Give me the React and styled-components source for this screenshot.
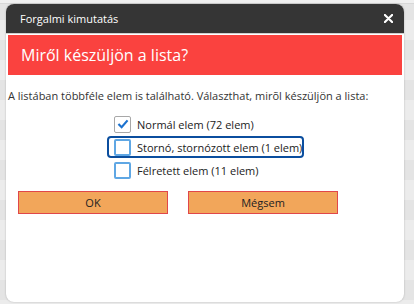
import React, { useState } from 'react'
import styled, { createGlobalStyle } from 'styled-components'

const GlobalStyle = createGlobalStyle`
  html, body {
    margin: 0;
    padding: 0;
    background: #e7e7e7;
    font-family: "Open Sans", "Noto Sans", sans-serif;
  }
  * { box-sizing: border-box; }
`

const Backdrop = styled.div`
  width: 414px;
  height: 304px;
  padding: 4px 0 0 6px;
  background:
    linear-gradient(#f0f0f0 0, #f0f0f0 3px, #d8d8d8 3px, #d8d8d8 4px, transparent 4px),
    repeating-linear-gradient(#e4e4e4 0, #e4e4e4 20px, #ececec 20px, #ececec 40px);
  overflow: hidden;
`

const Dialog = styled.div`
  width: 398px;
  height: 298px;
  background: #fff;
  border-radius: 8px;
  box-shadow: 0 0 2px rgba(0, 0, 0, 0.25);
  overflow: hidden;
  display: flex;
  flex-direction: column;
`

const TitleBar = styled.div`
  height: 30px;
  background: #353535;
  color: #fff;
  display: flex;
  align-items: center;
  justify-content: space-between;
  padding: 0 11px 0 14px;
  font-size: 11px;
  border-bottom: 1px solid #cfcfcf;
`

const CloseButton = styled.button`
  border: 0;
  background: none;
  padding: 0;
  display: flex;
  cursor: pointer;
`

const Content = styled.div`
  padding: 0 2px;
  display: flex;
  flex-direction: column;
`

const Banner = styled.h2`
  margin: 1px 0 0;
  height: 40px;
  background: #fa423f;
  color: #fff;
  font-size: 16px;
  font-weight: 400;
  display: flex;
  align-items: center;
  padding-left: 13px;
`

const Intro = styled.p`
  margin: 12px 0 0;
  font-size: 11px;
  line-height: 18px;
  color: #333;
`

const OptionList = styled.div`
  margin: 8px 0 0 99px;
  display: flex;
  flex-direction: column;
  align-items: flex-start;
  gap: 1px;
`

const Option = styled.label`
  height: 22px;
  display: flex;
  align-items: center;
  gap: 6px;
  padding: 0 0 0 5px;
  border: 2px solid ${p => (p.$focused ? '#0b4e9e' : 'transparent')};
  border-radius: 4px;
  font-size: 11px;
  color: #222;
  white-space: nowrap;
  cursor: pointer;
`

const Box = styled.span`
  width: 17px;
  height: 17px;
  flex: none;
  border: ${p => (p.$checked ? '1px solid #a8a8a8' : '2px solid #5fa7e4')};
  border-radius: 2px;
  background: #fff;
  display: flex;
  align-items: center;
  justify-content: center;
`

const Buttons = styled.div`
  margin: 10px 0 0 10px;
  display: flex;
  gap: 20px;
`

const ActionButton = styled.button`
  width: 150px;
  height: 23px;
  background: #f2a65a;
  border: 1px solid #e0474a;
  font-family: "Open Sans", "Noto Sans", sans-serif;
  font-size: 11px;
  color: #222;
  padding: 0;
  cursor: pointer;
`

const options = [
  { label: 'Normál elem (72 elem)', checked: true },
  { label: 'Stornó, stornózott elem (1 elem)', checked: false, focused: true },
  { label: 'Félretett elem (11 elem)', checked: false }
]

export default function App() {
  const [items, setItems] = useState(options)

  const toggle = i => {
    setItems(items.map((it, j) => (j === i ? { ...it, checked: !it.checked } : it)))
  }

  return (
    <>
      <GlobalStyle />
      <Backdrop>
        <Dialog>
          <TitleBar>
            <span>Forgalmi kimutatás</span>
            <CloseButton aria-label="Bezárás">
              <svg width="9" height="9" viewBox="0 0 10 10">
                <path d="M1 1L9 9M9 1L1 9" stroke="#fff" strokeWidth="2.4" strokeLinecap="round" />
              </svg>
            </CloseButton>
          </TitleBar>
          <Content>
            <Banner>Miről készüljön a lista?</Banner>
            <Intro>A listában többféle elem is található. Választhat, mirõl készüljön a lista:</Intro>
            <OptionList>
              {items.map((it, i) => (
                <Option key={i} $focused={it.focused} onClick={() => toggle(i)}>
                  <Box $checked={it.checked}>
                    {it.checked && (
                      <svg width="12" height="10" viewBox="0 0 13 11">
                        <path d="M1.5 5.5L5 9L11.5 1.5" fill="none" stroke="#1c72cf" strokeWidth="2.4" />
                      </svg>
                    )}
                  </Box>
                  {it.label}
                </Option>
              ))}
            </OptionList>
            <Buttons>
              <ActionButton>OK</ActionButton>
              <ActionButton>Mégsem</ActionButton>
            </Buttons>
          </Content>
        </Dialog>
      </Backdrop>
    </>
  )
}
